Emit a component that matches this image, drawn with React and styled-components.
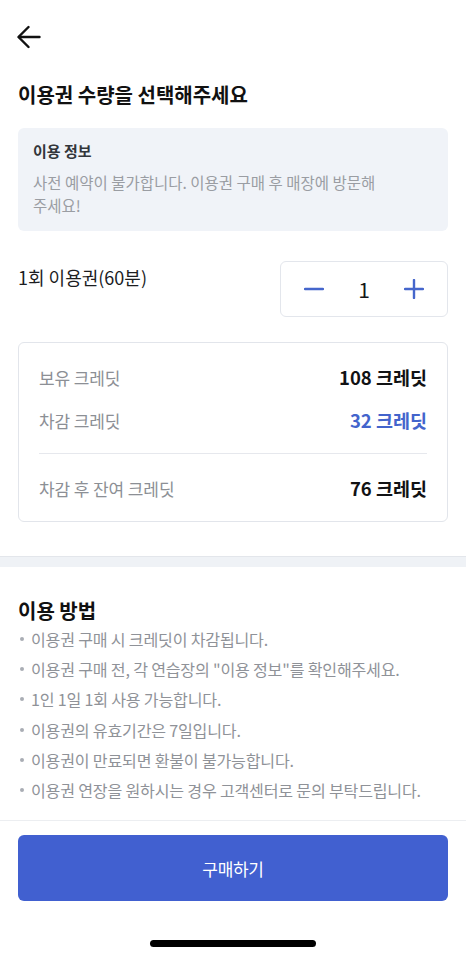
import React, { useState } from 'react'
import styled, { createGlobalStyle } from 'styled-components'

const GlobalStyle = createGlobalStyle`
  body {
    margin: 0;
    background: #ffffff;
    font-family: "Noto Sans CJK KR", "Noto Sans", sans-serif;
    color: #111111;
    -webkit-font-smoothing: antialiased;
    word-break: keep-all;
  }
  * { box-sizing: border-box; }
`

const Page = styled.div`
  width: 466px;
  min-height: 956px;
  display: flex;
  flex-direction: column;
  background: #ffffff;
`

const Header = styled.header`
  height: 74px;
  display: flex;
  align-items: center;
  padding: 0 17px;
`

const BackButton = styled.button`
  border: 0;
  padding: 0;
  background: none;
  display: flex;
  cursor: pointer;
`

const Content = styled.main`
  padding: 0 18px;
`

const Title = styled.h1`
  margin: 7px 0 0;
  font-size: 20px;
  line-height: 28px;
  font-weight: 700;
`

const InfoBox = styled.section`
  margin-top: 19px;
  padding: 12px 30px 14px 15px;
  background: #f0f3f8;
  border-radius: 6px;
`

const InfoTitle = styled.h2`
  margin: 0;
  font-size: 15px;
  line-height: 22px;
  font-weight: 700;
  color: #33363b;
`

const InfoText = styled.p`
  margin: 9px 0 0;
  font-size: 15.5px;
  line-height: 23px;
  color: #9a9da3;
  word-break: keep-all;
`

const QuantityRow = styled.div`
  margin-top: 30px;
  display: flex;
  justify-content: space-between;
  align-items: flex-start;
`

const TicketLabel = styled.span`
  padding-top: 4px;
  font-size: 18px;
  line-height: 24px;
  color: #1c1d1f;
`

const Stepper = styled.div`
  width: 168px;
  height: 56px;
  padding: 0 8px;
  display: grid;
  grid-template-columns: repeat(3, 1fr);
  align-items: center;
  border: 1px solid #e3e6ec;
  border-radius: 6px;
`

const StepButton = styled.button`
  border: 0;
  padding: 0;
  background: none;
  display: flex;
  justify-content: center;
  align-items: center;
  height: 100%;
  cursor: pointer;
`

const Count = styled.span`
  text-align: center;
  font-size: 21px;
  color: #151618;
`

const CreditCard = styled.section`
  margin-top: 25px;
  padding: 21px 20px 20px;
  border: 1px solid #e2e5eb;
  border-radius: 6px;
  display: flex;
  flex-direction: column;
  gap: 17px;
`

const CreditRow = styled.div`
  display: flex;
  justify-content: space-between;
  align-items: center;
  height: 26px;
`

const CreditLabel = styled.span`
  font-size: 17px;
  color: #8c8f95;
  letter-spacing: -0.1px;
`

const CreditValue = styled.span`
  font-size: 18.5px;
  font-weight: 700;
  color: ${props => (props.$accent ? '#4364cc' : '#111214')};
`

const Divider = styled.hr`
  margin: 3px 0 4px;
  border: 0;
  border-top: 1px solid #e6e8ed;
`

const Band = styled.div`
  margin-top: 34px;
  height: 11px;
  background: #eff2f6;
  border-top: 1px solid #e3e6eb;
`

const GuideTitle = styled.h2`
  margin: 30px 0 0;
  font-size: 20px;
  line-height: 27px;
  font-weight: 700;
`

const GuideList = styled.ul`
  margin: 0;
  padding: 0;
  list-style: none;
`

const GuideItem = styled.li`
  display: flex;
  align-items: center;
  gap: 7px;
  height: 30.2px;
  font-size: 16.1px;
  color: #8f9298;
  letter-spacing: -0.2px;
  white-space: nowrap;

  &::before {
    content: '';
    flex: none;
    width: 4px;
    height: 4px;
    margin-left: 2px;
    border-radius: 50%;
    background: #a9adb4;
  }
`

const Footer = styled.footer`
  margin-top: auto;
  border-top: 1px solid #eceef1;
  padding: 14px 18px 0;
`

const BuyButton = styled.button`
  width: 100%;
  height: 66px;
  border: 0;
  border-radius: 6px;
  background: #4160d0;
  color: #ffffff;
  font-family: inherit;
  font-size: 17px;
  letter-spacing: -0.3px;
  cursor: pointer;
`

const HomeBarArea = styled.div`
  display: flex;
  justify-content: center;
  padding: 39px 0 9px;
`

const HomeBar = styled.div`
  width: 166px;
  height: 7px;
  border-radius: 4px;
  background: #000000;
`

const ArrowLeft = () => (
  <svg width="24" height="24" viewBox="0 0 24 24" fill="none" stroke="#111" strokeWidth="2.4" strokeLinecap="round" strokeLinejoin="round">
    <path d="M22.5 12H2" />
    <path d="M11.5 2L1.5 12l10 10" />
  </svg>
)

const MinusIcon = () => (
  <svg width="20" height="20" viewBox="0 0 20 20" fill="none" stroke="#4566cc" strokeWidth="2.4" strokeLinecap="round">
    <path d="M1 10h18" />
  </svg>
)

const PlusIcon = () => (
  <svg width="20" height="20" viewBox="0 0 20 20" fill="none" stroke="#4566cc" strokeWidth="2.4" strokeLinecap="round">
    <path d="M1 10h18" />
    <path d="M10 1v18" />
  </svg>
)

const guides = [
  '이용권 구매 시 크레딧이 차감됩니다.',
  '이용권 구매 전, 각 연습장의 "이용 정보"를 확인해주세요.',
  '1인 1일 1회 사용 가능합니다.',
  '이용권의 유효기간은 7일입니다.',
  '이용권이 만료되면 환불이 불가능합니다.',
  '이용권 연장을 원하시는 경우 고객센터로 문의 부탁드립니다.',
]

export default function App() {
  const [count, setCount] = useState(1)
  const held = 108
  const price = 32 * count

  return (
    <Page>
      <GlobalStyle />
      <Header>
        <BackButton aria-label="뒤로가기">
          <ArrowLeft />
        </BackButton>
      </Header>

      <Content>
        <Title>이용권 수량을 선택해주세요</Title>

        <InfoBox>
          <InfoTitle>이용 정보</InfoTitle>
          <InfoText>사전 예약이 불가합니다. 이용권 구매 후 매장에 방문해 주세요!</InfoText>
        </InfoBox>

        <QuantityRow>
          <TicketLabel>1회 이용권(60분)</TicketLabel>
          <Stepper>
            <StepButton aria-label="감소" onClick={() => setCount(c => Math.max(1, c - 1))}>
              <MinusIcon />
            </StepButton>
            <Count>{count}</Count>
            <StepButton aria-label="증가" onClick={() => setCount(c => c + 1)}>
              <PlusIcon />
            </StepButton>
          </Stepper>
        </QuantityRow>

        <CreditCard>
          <CreditRow>
            <CreditLabel>보유 크레딧</CreditLabel>
            <CreditValue>{held} 크레딧</CreditValue>
          </CreditRow>
          <CreditRow>
            <CreditLabel>차감 크레딧</CreditLabel>
            <CreditValue $accent>{price} 크레딧</CreditValue>
          </CreditRow>
          <Divider />
          <CreditRow>
            <CreditLabel>차감 후 잔여 크레딧</CreditLabel>
            <CreditValue>{held - price} 크레딧</CreditValue>
          </CreditRow>
        </CreditCard>
      </Content>

      <Band />

      <Content>
        <GuideTitle>이용 방법</GuideTitle>
        <GuideList>
          {guides.map(text => (
            <GuideItem key={text}>{text}</GuideItem>
          ))}
        </GuideList>
      </Content>

      <Footer>
        <BuyButton>구매하기</BuyButton>
      </Footer>
      <HomeBarArea>
        <HomeBar />
      </HomeBarArea>
    </Page>
  )
}
